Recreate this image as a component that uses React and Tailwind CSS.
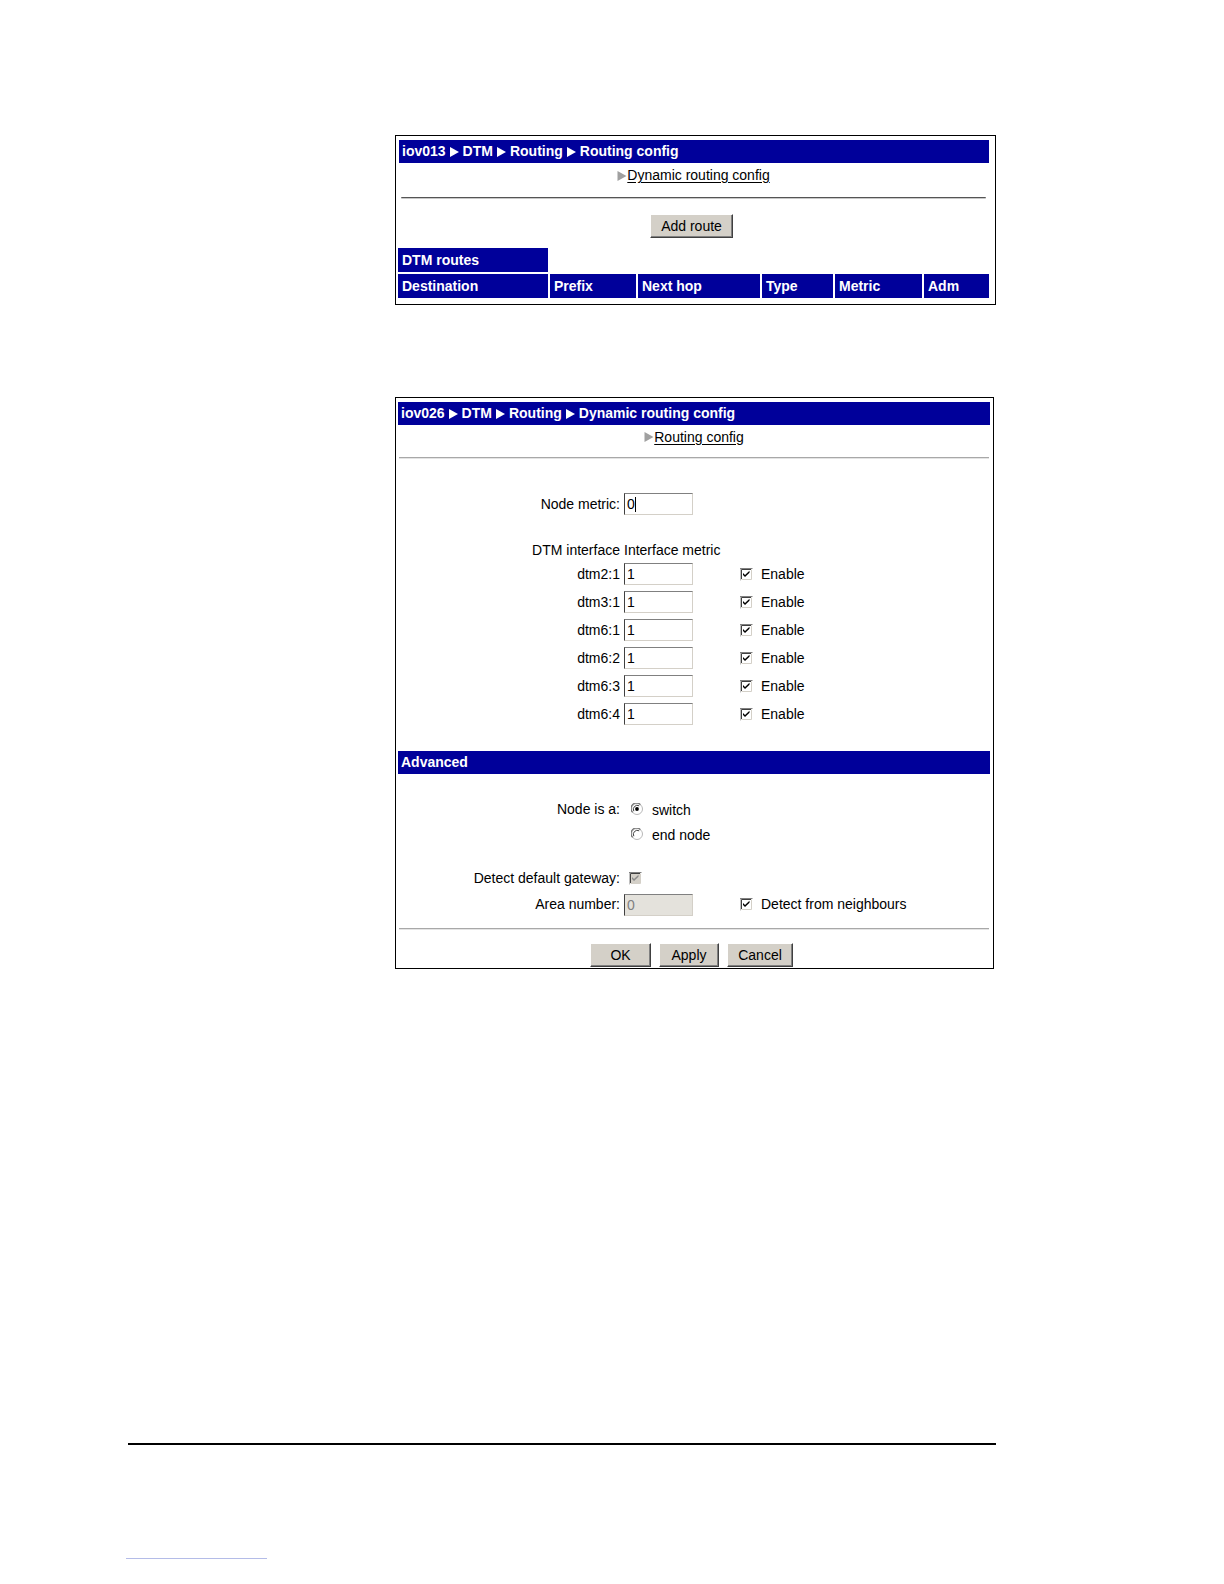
import React from "react";

const FONT = "font-['Liberation_Sans',Arial,Helvetica,sans-serif]";

function Tri({ className = "", w = 9, h = 10 }) {
  return (
    <svg width={w} height={h} viewBox="0 0 9 10" className={className}>
      <path d="M0 0 L9 5 L0 10 Z" fill="currentColor" />
    </svg>
  );
}

function Crumb({ parts }) {
  return (
    <div className="h-[23px] bg-[#00009a] text-white font-bold text-[14px] leading-[23px] pl-[3px] flex items-center gap-[4px] whitespace-nowrap">
      {parts.map((p, i) => (
        <React.Fragment key={i}>
          {i > 0 && <Tri className="text-white" />}
          <span>{p}</span>
        </React.Fragment>
      ))}
    </div>
  );
}

function NavLink({ text, h }) {
  return (
    <div className={`flex items-center justify-center text-[14px] text-black ${h}`}>
      <Tri className="text-[#a0a0a0]" w={10} h={10} />
      <span className="underline underline-offset-2">{text}</span>
    </div>
  );
}

function Btn({ children, w }) {
  return (
    <div
      className={`${w} h-[24px] bg-[#d4d0c8] border border-t-white border-l-white border-r-[#404040] border-b-[#404040] shadow-[inset_-1px_-1px_0_#808080] flex items-center justify-center text-[14px] text-black`}
    >
      {children}
    </div>
  );
}

function Field({ value, disabled, caret }) {
  return (
    <div
      className={`w-[69px] h-[22px] border border-t-[#808080] border-l-[#404040] border-r-[#d4d0c8] border-b-[#d4d0c8] ${
        disabled ? "bg-[#e4e2dc] text-[#808080]" : "bg-white text-black"
      } text-[14px] leading-[20px] pl-[2px] flex items-center`}
    >
      <span>{value}</span>
      {caret && <span className="w-px h-[15px] bg-black" />}
    </div>
  );
}

function Check({ disabled }) {
  const fill = disabled ? "#d4d0c8" : "#ffffff";
  const mark = disabled ? "#8a8a8a" : "#000000";
  return (
    <svg width="13" height="13" viewBox="0 0 13 13" className="shrink-0">
      <rect x="0" y="0" width="13" height="13" fill="#ffffff" />
      <path d="M0 12.5 V0.5 H12.5" stroke="#808080" strokeWidth="1" fill="none" />
      <path d="M1.5 11 V1.5 H11" stroke="#404040" strokeWidth="1" fill="none" />
      <path d="M1.5 11.5 H11.5 V1.5" stroke="#d4d0c8" strokeWidth="1" fill="none" />
      <rect x="2" y="2" width="9" height="9" fill={fill} />
      <path d="M3 5 L5 7 L9.5 2.8 V4.8 L5 9 L3 7 Z" fill={mark} />
    </svg>
  );
}

function Radio({ checked }) {
  return (
    <svg width="12" height="12" viewBox="0 0 12 12" className="shrink-0">
      <circle cx="6" cy="6" r="5.5" fill="#ffffff" stroke="#b8b8b8" strokeWidth="1" />
      <path d="M1.6 9.4 A5.2 5.2 0 0 1 9.4 1.6" stroke="#707070" strokeWidth="1.2" fill="none" />
      <path d="M2.8 8.2 A4 4 0 0 1 8.2 2.8" stroke="#404040" strokeWidth="1" fill="none" />
      {checked && <circle cx="6" cy="6" r="1.9" fill="#000000" />}
    </svg>
  );
}

function Row({ label, children, extra, className = "", h = "h-[22px]" }) {
  return (
    <div className={`flex items-center ${h} ${className}`}>
      <div className="w-[222px] text-right text-[14px] text-black whitespace-nowrap">{label}</div>
      <div className="w-[116px] ml-[4px] flex items-center">{children}</div>
      {extra && <div className="flex items-center gap-[8px] text-[14px] text-black whitespace-nowrap">{extra}</div>}
    </div>
  );
}

function Cell({ w, children }) {
  return (
    <div className={`${w} h-[24px] bg-[#00009a] text-white font-bold text-[14px] pl-[4px] flex items-center`}>
      {children}
    </div>
  );
}

export default function App() {
  const ifaces = ["dtm2:1", "dtm3:1", "dtm6:1", "dtm6:2", "dtm6:3", "dtm6:4"];
  return (
    <div className={`${FONT} w-[1224px] h-[1584px] overflow-hidden bg-white pt-[135px] flex flex-col items-start`}>
      {/* Panel 1 */}
      <div className="ml-[395px] w-[601px] shrink-0 border border-black pt-[4px] pl-[2px] pr-[6px] pb-[6px] flex flex-col">
        <div className="ml-px">
          <Crumb parts={["iov013", "DTM", "Routing", "Routing config"]} />
        </div>
        <NavLink text="Dynamic routing config" h="h-[25px]" />
        <div className="mt-[9px] mx-[3px] h-[2px] border-t border-t-[#555555] border-b border-b-[#c8c8c8] rounded-full" />
        <div className="mt-[15px] flex justify-center">
          <div className="ml-[-4px]">
            <Btn w="w-[83px]">Add route</Btn>
          </div>
        </div>
        <div className="mt-[10px] flex">
          <Cell w="w-[150px]">DTM routes</Cell>
        </div>
        <div className="mt-[2px] flex gap-[2px]">
          <Cell w="w-[150px]">Destination</Cell>
          <Cell w="w-[86px]">Prefix</Cell>
          <Cell w="w-[122px]">Next hop</Cell>
          <Cell w="w-[71px]">Type</Cell>
          <Cell w="w-[87px]">Metric</Cell>
          <Cell w="w-[65px]">Adm</Cell>
        </div>
      </div>

      {/* Panel 2 */}
      <div className="mt-[92px] ml-[395px] w-[599px] h-[572px] shrink-0 overflow-hidden border border-black pt-[4px] pl-[2px] pr-[3px] flex flex-col">
        <Crumb parts={["iov026", "DTM", "Routing", "Dynamic routing config"]} />
        <NavLink text="Routing config" h="h-[24px]" />
        <div className="mt-[8px] mx-px h-[2px] border-t border-t-[#a8a8a8] border-b border-b-[#e4e4e4]" />

        <Row label="Node metric:" className="mt-[34px]">
          <Field value="0" caret />
        </Row>

        <Row label="DTM interface" className="mt-[24px]">
          <span className="text-[14px] text-black whitespace-nowrap">Interface metric</span>
        </Row>
        {ifaces.map((n, i) => (
          <Row
            key={n}
            label={n}
            className={i === 0 ? "mt-[2px]" : "mt-[6px]"}
            extra={
              <>
                <Check />
                <span>Enable</span>
              </>
            }
          >
            <Field value="1" />
          </Row>
        ))}

        <div className="mt-[26px] h-[23px] shrink-0 bg-[#00009a] text-white font-bold text-[14px] pl-[3px] flex items-center">
          Advanced
        </div>

        <Row label="Node is a:" className="mt-[24px]">
          <div className="ml-[7px] flex items-center gap-[9px] text-[14px] text-black">
            <Radio checked />
            <span className="mt-[3px]">switch</span>
          </div>
        </Row>
        <Row label="" className="mt-[3px]">
          <div className="ml-[7px] flex items-center gap-[9px] text-[14px] text-black whitespace-nowrap">
            <Radio />
            <span className="mt-[3px]">end node</span>
          </div>
        </Row>

        <Row label="Detect default gateway:" className="mt-[22px]">
          <div className="ml-[5px] flex items-center">
            <Check disabled />
          </div>
        </Row>
        <Row
          label="Area number:"
          className="mt-[4px]"
          h="h-[23px]"
          extra={
            <>
              <Check />
              <span>Detect from neighbours</span>
            </>
          }
        >
          <Field value="0" disabled />
        </Row>

        <div className="mt-[12px] mx-px h-[2px] shrink-0 border-t border-t-[#a8a8a8] border-b border-b-[#e4e4e4]" />

        <div className="mt-[13px] flex justify-center gap-[8px] ml-[-5px] shrink-0">
          <Btn w="w-[61px]">OK</Btn>
          <Btn w="w-[60px]">Apply</Btn>
          <Btn w="w-[66px]">Cancel</Btn>
        </div>
      </div>

      <div className="mt-[474px] ml-[128px] w-[868px] h-[2px] shrink-0 bg-black" />
      <div className="mt-[113px] ml-[126px] w-[141px] h-px shrink-0 bg-[#b4bce8]" />
    </div>
  );
}
